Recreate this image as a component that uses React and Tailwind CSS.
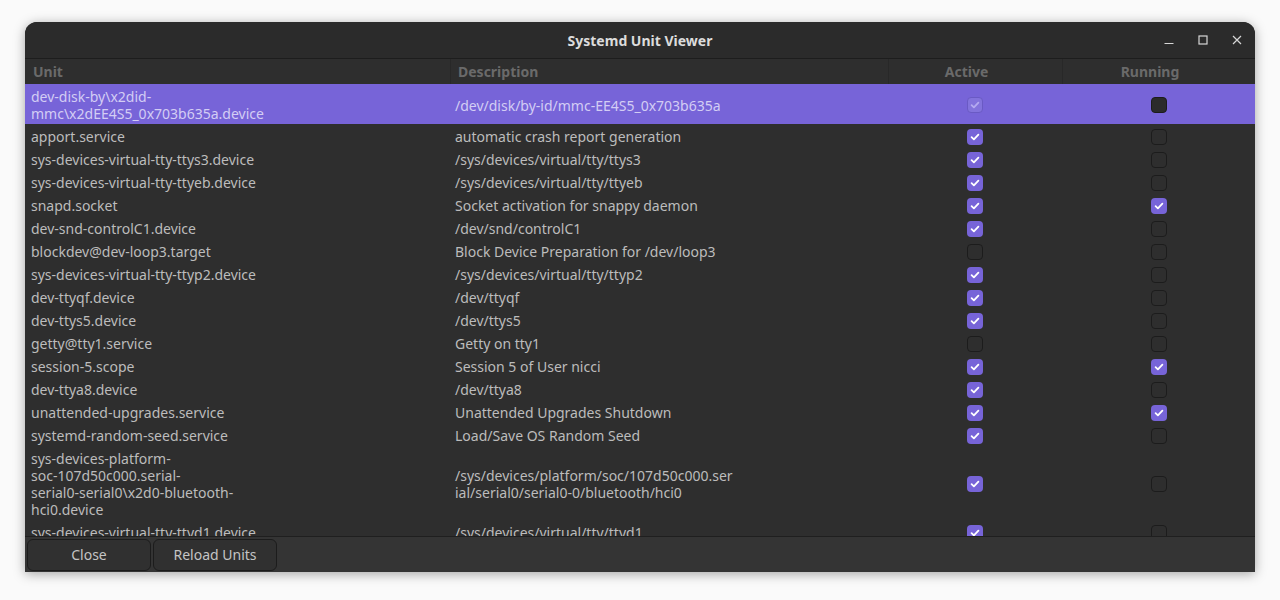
import React from "react";

const rows = [
  { u: ["dev-disk-by\\x2did-", "mmc\\x2dEE4S5_0x703b635a.device"], d: ["/dev/disk/by-id/mmc-EE4S5_0x703b635a"], a: true, r: false, sel: true },
  { u: ["apport.service"], d: ["automatic crash report generation"], a: true, r: false },
  { u: ["sys-devices-virtual-tty-ttys3.device"], d: ["/sys/devices/virtual/tty/ttys3"], a: true, r: false },
  { u: ["sys-devices-virtual-tty-ttyeb.device"], d: ["/sys/devices/virtual/tty/ttyeb"], a: true, r: false },
  { u: ["snapd.socket"], d: ["Socket activation for snappy daemon"], a: true, r: true },
  { u: ["dev-snd-controlC1.device"], d: ["/dev/snd/controlC1"], a: true, r: false },
  { u: ["blockdev@dev-loop3.target"], d: ["Block Device Preparation for /dev/loop3"], a: false, r: false },
  { u: ["sys-devices-virtual-tty-ttyp2.device"], d: ["/sys/devices/virtual/tty/ttyp2"], a: true, r: false },
  { u: ["dev-ttyqf.device"], d: ["/dev/ttyqf"], a: true, r: false },
  { u: ["dev-ttys5.device"], d: ["/dev/ttys5"], a: true, r: false },
  { u: ["getty@tty1.service"], d: ["Getty on tty1"], a: false, r: false },
  { u: ["session-5.scope"], d: ["Session 5 of User nicci"], a: true, r: true },
  { u: ["dev-ttya8.device"], d: ["/dev/ttya8"], a: true, r: false },
  { u: ["unattended-upgrades.service"], d: ["Unattended Upgrades Shutdown"], a: true, r: true },
  { u: ["systemd-random-seed.service"], d: ["Load/Save OS Random Seed"], a: true, r: false },
  {
    u: ["sys-devices-platform-", "soc-107d50c000.serial-", "serial0-serial0\\x2d0-bluetooth-", "hci0.device"],
    d: ["/sys/devices/platform/soc/107d50c000.ser", "ial/serial0/serial0-0/bluetooth/hci0"],
    a: true,
    r: false,
  },
  { u: ["sys-devices-virtual-tty-ttyd1.device"], d: ["/sys/devices/virtual/tty/ttyd1"], a: true, r: false },
];

function Check({ on, sel }) {
  if (on) {
    return (
      <div
        className={
          sel
            ? "w-4 h-4 rounded-[4px] bg-[#8373dc] border border-[#6a5ac4] flex items-center justify-center"
            : "w-4 h-4 rounded-[4px] bg-[#7764d8] flex items-center justify-center"
        }
      >
        <svg width="12" height="12" viewBox="0 0 12 12">
          <path
            d="M2.6 6.2 L4.9 8.4 L9.4 3.6"
            fill="none"
            stroke={sel ? "#b4aaf0" : "#ffffff"}
            strokeWidth="1.8"
            strokeLinecap="round"
            strokeLinejoin="round"
          />
        </svg>
      </div>
    );
  }
  return (
    <div
      className={
        sel
          ? "w-4 h-4 rounded-[4px] bg-[#2b2b2b] border border-[#1c1c1c]"
          : "w-4 h-4 rounded-[4px] border border-[#1c1c1c]"
      }
    />
  );
}

export default function App() {
  return (
    <div
      className="w-[1280px] h-[600px] bg-[#fafafa] pt-[22px] pl-[25px] overflow-hidden"
      style={{ fontFamily: "'Noto Sans', sans-serif" }}
    >
      <div className="w-[1230px] h-[550px] flex flex-col rounded-t-[12px] overflow-hidden bg-[#2e2e2e] shadow-[0_2px_12px_rgba(0,0,0,0.35)]">
        {/* Title bar */}
        <div className="h-[37px] bg-[#2b2b2b] border-b border-[#1d1d1d] flex items-center relative shrink-0">
          <div className="flex-1 text-center text-[14px] font-bold text-[#dcdcdc] pt-[1px]">Systemd Unit Viewer</div>
          <div className="absolute right-[13px] top-0 h-full flex items-center gap-[24px]">
            <svg width="10" height="10" viewBox="0 0 10 10">
              <path d="M0.5 8.5 H9.5" stroke="#d6d6d6" strokeWidth="1.2" />
            </svg>
            <svg width="10" height="10" viewBox="0 0 10 10">
              <rect x="1" y="1" width="8" height="8" fill="none" stroke="#d6d6d6" strokeWidth="1.2" />
            </svg>
            <svg width="10" height="10" viewBox="0 0 10 10">
              <path d="M1 1 L9 9 M9 1 L1 9" stroke="#d6d6d6" strokeWidth="1.2" />
            </svg>
          </div>
        </div>

        {/* Header */}
        <div className="h-[25px] grid grid-cols-[425px_438px_174px_193px] text-[14px] font-bold text-[#6a6a6a] shrink-0 bg-[#2e2e2e]">
          <div className="flex items-center pl-[8px]">Unit</div>
          <div className="flex items-center pl-[7px] border-l border-[#282828]">Description</div>
          <div className="flex items-center justify-center pr-[18px] border-l border-[#282828]">Active</div>
          <div className="flex items-center justify-center pr-[18px] border-l border-[#282828]">Running</div>
        </div>

        {/* List */}
        <div className="flex-1 overflow-hidden">
          {rows.map((row, i) => (
            <div
              key={i}
              className={
                "grid grid-cols-[425px_438px_174px_193px] pt-[4px] pb-[2px] text-[14px] leading-[17px] " +
                (row.sel ? "bg-[#7764d8] text-[#d3cdf4]" : "text-[#bcbcbc]")
              }
            >
              <div className="pl-[6px]">
                {row.u.map((l, j) => (
                  <div key={j}>{l}</div>
                ))}
              </div>
              <div className="pl-[5px] flex flex-col justify-center">
                {row.d.map((l, j) => (
                  <div key={j}>{l}</div>
                ))}
              </div>
              <div className="flex items-center justify-center">
                <Check on={row.a} sel={row.sel} />
              </div>
              <div className="flex items-center justify-center">
                <Check on={row.r} sel={row.sel} />
              </div>
            </div>
          ))}
        </div>

        {/* Bottom bar */}
        <div className="h-[36px] border-t border-[#1f1f1f] bg-[#343434] flex items-center gap-[2px] px-[2px] shrink-0">
          <button className="w-[124px] h-[32px] rounded-[6px] border border-[#1c1c1c] bg-[#303030] text-[14px] text-[#c4c4c4]">
            Close
          </button>
          <button className="w-[124px] h-[32px] rounded-[6px] border border-[#1c1c1c] bg-[#303030] text-[14px] text-[#c4c4c4]">
            Reload Units
          </button>
        </div>
      </div>
    </div>
  );
}
